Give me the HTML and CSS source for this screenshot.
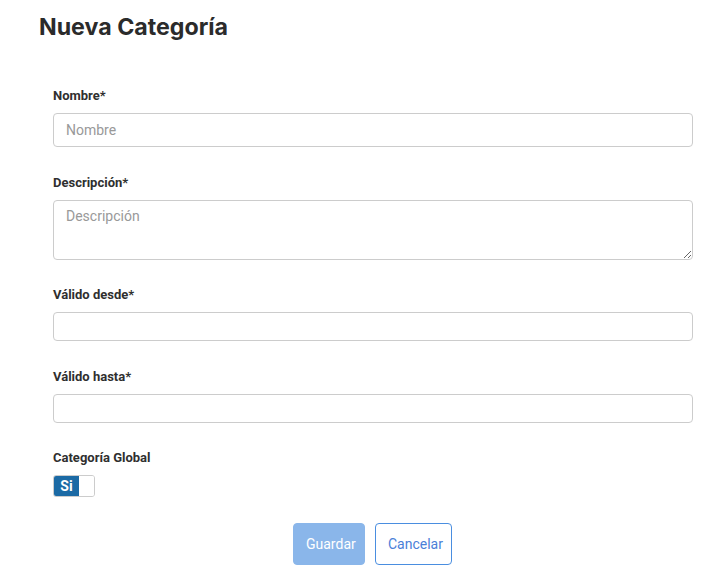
FILE: index.html
```html
<!DOCTYPE html>
<html lang="es">
<head>
<meta charset="utf-8">
<title>Nueva Categoría</title>
<link rel="stylesheet" href="styles.css">
</head>
<body>
<div class="page">
  <h1 class="title">Nueva Categoría</h1>
  <form class="form">
    <div class="group">
      <label class="label">Nombre*</label>
      <input class="input" type="text" placeholder="Nombre">
    </div>
    <div class="group">
      <label class="label">Descripción*</label>
      <textarea class="textarea" placeholder="Descripción"></textarea>
    </div>
    <div class="group">
      <label class="label">Válido desde*</label>
      <input class="input date" type="text">
    </div>
    <div class="group">
      <label class="label">Válido hasta*</label>
      <input class="input date" type="text">
    </div>
    <div class="group group-last">
      <label class="label">Categoría Global</label>
      <div class="toggle"><span class="toggle-on">Si</span><span class="toggle-off"></span></div>
    </div>
    <div class="actions">
      <button type="button" class="btn btn-primary">Guardar</button>
      <button type="button" class="btn btn-outline">Cancelar</button>
    </div>
  </form>
</div>
</body>
</html>
```
FILE: styles.css
```css
html, body { margin: 0; padding: 0; background: #fff; }
body { font-family: Roboto, "Liberation Sans", sans-serif; color: #333; }
.page { padding: 12px 15px 0 39px; }
.title {
  margin: 0;
  font-family: Inter, "Liberation Sans", sans-serif;
  font-weight: 700;
  font-size: 23.2px;
  line-height: 30px;
  color: #2b2b2b;
}
.form { padding: 46px 0 0 14px; }
.group { margin-bottom: 27.5px; }
.group-last { margin-bottom: 26px; }
.label {
  display: block;
  font-size: 13px;
  font-weight: 700;
  line-height: 16px;
  margin-bottom: 9px;
  color: #2f2f2f;
}
.input, .textarea {
  display: block;
  box-sizing: border-box;
  width: 100%;
  border: 1px solid #ccc;
  border-radius: 4px;
  font-family: Roboto, "Liberation Sans", sans-serif;
  font-size: 14px;
  color: #555;
  padding: 0 12px;
  background: #fff;
  outline: none;
  margin: 0;
}
.input { height: 34px; }
.input.date { height: 29px; }
.textarea { height: 60px; padding: 7px 12px; resize: vertical; }
.input::placeholder, .textarea::placeholder { color: #999; }
.toggle {
  display: flex;
  width: 42px;
  height: 22px;
  border: 1px solid #ccc;
  border-radius: 3px;
  overflow: hidden;
  box-sizing: border-box;
}
.toggle-on {
  width: 25px;
  background: #1b6aa5;
  color: #fff;
  font-weight: 700;
  font-size: 14px;
  line-height: 20px;
  text-align: center;
}
.toggle-off { flex: 1; background: #fff; }
.actions { display: flex; justify-content: center; gap: 10px; padding-right: 1px; }
.btn {
  height: 42px;
  border-radius: 4px;
  font-family: Roboto, "Liberation Sans", sans-serif;
  font-size: 14px;
  padding: 0 12px;
  cursor: pointer;
  margin: 0;
}
.btn-primary { background: #8ab6ea; border: 1px solid #8ab6ea; color: #fff; width: 72px; }
.btn-outline { background: #fff; border: 1px solid #4a8ee0; color: #4a80d8; width: 77px; }
```
